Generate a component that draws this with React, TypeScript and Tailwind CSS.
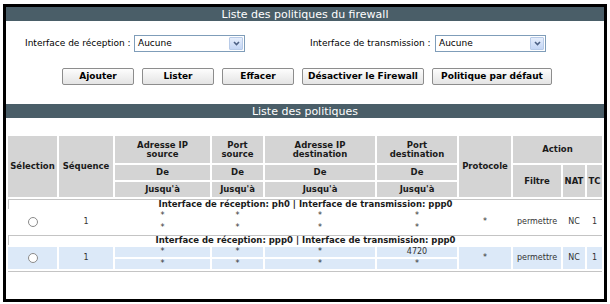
import React from 'react'

const font = { fontFamily: '"DejaVu Sans", Verdana, sans-serif' }

function Select() {
  return (
    <div className="flex h-[17px] w-[111px] items-center border border-[#7f9db9] bg-white">
      <span className="flex-1 pl-[3px] text-[9px] text-black">Aucune</span>
      <span className="m-[1px] flex h-[13px] w-[14px] items-center justify-center rounded-[1px] border border-[#b8cbe8] bg-gradient-to-b from-[#e6eefc] to-[#c4d6f5]">
        <svg width="7" height="5" viewBox="0 0 7 5">
          <path d="M1 1 L3.5 3.5 L6 1" fill="none" stroke="#4d6185" strokeWidth="1.6" />
        </svg>
      </span>
    </div>
  )
}

function Btn({ label, w }: { label: string; w: string }) {
  return (
    <button
      className={`${w} h-[17px] rounded-[2px] border border-[#8d8d8d] bg-gradient-to-b from-[#fdfdfd] to-[#e4e4e4] text-[9px] font-bold text-black`}
    >
      {label}
    </button>
  )
}

function Bar({ title }: { title: string }) {
  return (
    <div className="flex h-[14px] items-center justify-center bg-[#4a5e68] text-[11px] leading-none text-white">
      {title}
    </div>
  )
}

const th = 'bg-[#d4d4d4] font-bold text-[8.5px] text-[#1a1a1a] text-center p-0 leading-[9px]'
const td = 'text-center text-[8px] text-[#333] p-0 leading-[10px]'

function Group({ iface, blue, port }: { iface: string; blue?: boolean; port?: string }) {
  const bg = blue ? 'bg-[#dce9f8]' : ''
  return (
    <>
      <tr>
        <td colSpan={10} className="border-t border-l border-[#c4c4c4] p-0 text-center text-[8.5px] font-bold leading-[9px] text-[#1a1a1a]">
          {iface}
        </td>
      </tr>
      <tr>
        <td rowSpan={2} className={`${td} ${bg}`}>
          <span className="inline-block h-[10px] w-[10px] rounded-full border border-[#8a8a8a] bg-white align-middle" />
        </td>
        <td rowSpan={2} className={`${td} ${bg}`}>1</td>
        <td className={`${td} ${bg}`}>*</td>
        <td className={`${td} ${bg}`}>*</td>
        <td className={`${td} ${bg}`}>*</td>
        <td className={`${td} ${bg}`}>{port ?? '*'}</td>
        <td rowSpan={2} className={`${td} ${bg}`}>*</td>
        <td rowSpan={2} className={`${td} ${bg}`}>permettre</td>
        <td rowSpan={2} className={`${td} ${bg}`}>NC</td>
        <td rowSpan={2} className={`${td} ${bg}`}>1</td>
      </tr>
      <tr>
        <td className={`${td} ${bg}`}>*</td>
        <td className={`${td} ${bg}`}>*</td>
        <td className={`${td} ${bg}`}>*</td>
        <td className={`${td} ${bg}`}>*</td>
      </tr>
    </>
  )
}

export default function App() {
  return (
    <div className="h-[304px] w-[610px] bg-white pl-[3px] pt-[4px]" style={font}>
      <div className="h-[298px] w-[604px] border-[3px] border-black bg-white">
        <Bar title="Liste des politiques du firewall" />

        <div className="mt-[14px] flex h-[17px] items-center text-[9px] text-black">
          <span className="ml-[19px] w-[109px]">Interface de réception :</span>
          <Select />
          <span className="ml-[65px] w-[125px]">Interface de transmission :</span>
          <Select />
        </div>

        <div className="mt-[16px] flex gap-[8px] pl-[56px]">
          <Btn label="Ajouter" w="w-[72px]" />
          <Btn label="Lister" w="w-[72px]" />
          <Btn label="Effacer" w="w-[72px]" />
          <Btn label="Désactiver le Firewall" w="w-[122px]" />
          <Btn label="Politique par défaut" w="w-[120px]" />
        </div>

        <div className="mt-[19px]">
          <Bar title="Liste des politiques" />
        </div>

        <table className="mt-[16px] w-full table-fixed border-separate border-spacing-[2px]">
          <colgroup>
            <col className="w-[49px]" />
            <col className="w-[54px]" />
            <col className="w-[95px]" />
            <col className="w-[51px]" />
            <col className="w-[110px]" />
            <col className="w-[80px]" />
            <col className="w-[52px]" />
            <col className="w-[48px]" />
            <col className="w-[22px]" />
            <col className="w-[15px]" />
          </colgroup>
          <thead>
            <tr className="h-[27px]">
              <th rowSpan={3} className={th}>Sélection</th>
              <th rowSpan={3} className={th}>Séquence</th>
              <th className={th}>Adresse IP<br />source</th>
              <th className={th}>Port<br />source</th>
              <th className={th}>Adresse IP<br />destination</th>
              <th className={th}>Port<br />destination</th>
              <th rowSpan={3} className={th}>Protocole</th>
              <th colSpan={3} className={th}>Action</th>
            </tr>
            <tr className="h-[15px]">
              <th className={th}>De</th>
              <th className={th}>De</th>
              <th className={th}>De</th>
              <th className={th}>De</th>
              <th rowSpan={2} className={th}>Filtre</th>
              <th rowSpan={2} className={th}>NAT</th>
              <th rowSpan={2} className={th}>TC</th>
            </tr>
            <tr className="h-[15px]">
              <th className={th}>Jusqu'à</th>
              <th className={th}>Jusqu'à</th>
              <th className={th}>Jusqu'à</th>
              <th className={th}>Jusqu'à</th>
            </tr>
          </thead>
          <tbody>
            <Group iface="Interface de réception: ph0 | Interface de transmission: ppp0" />
            <Group iface="Interface de réception: ppp0 | Interface de transmission: ppp0" blue port="4720" />
            <tr>
              <td colSpan={10} className="h-0 border-t border-[#c4c4c4] p-0" />
            </tr>
          </tbody>
        </table>
      </div>
    </div>
  )
}
